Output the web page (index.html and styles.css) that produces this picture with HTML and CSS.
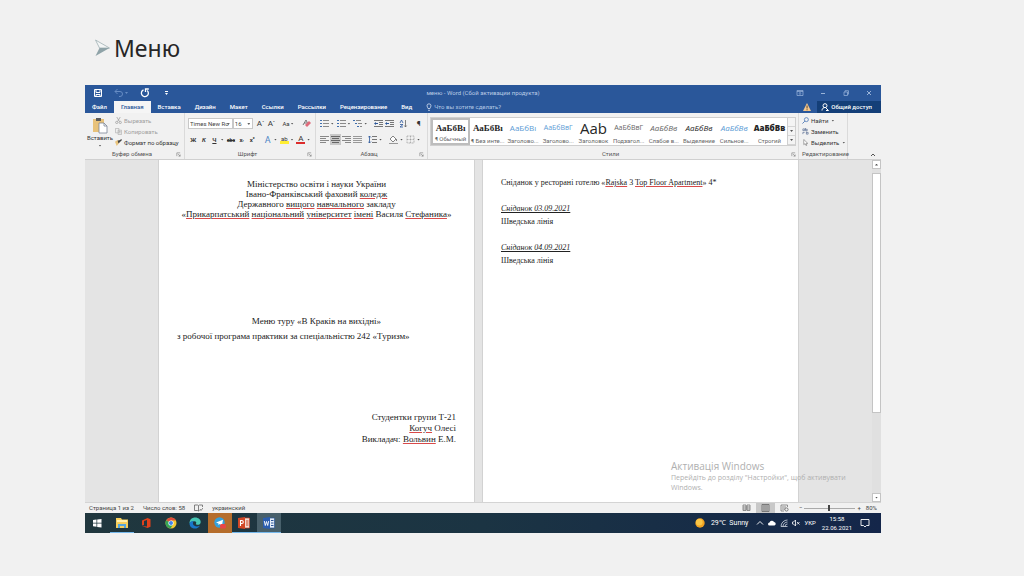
FILE: index.html
```html
<!DOCTYPE html>
<html lang="uk">
<head>
<meta charset="utf-8">
<title>Меню</title>
<link rel="stylesheet" href="styles.css">
</head>
<body>
<svg class="defs" aria-hidden="true">
  <symbol id="list" viewBox="0 0 9 9"><path d="M0 1h2v1H0zM0 4h2v1H0zM0 7h2v1H0z" fill="#3f6fae"/><path d="M3 1h6v1H3zM3 4h6v1H3zM3 7h6v1H3z" fill="#8a8a8a"/></symbol>
  <symbol id="multi" viewBox="0 0 9 9"><path d="M0 1h2v1H0zM2 4h2v1H2zM4 7h2v1H4z" fill="#3f6fae"/><path d="M3 1h5v1H3zM5 4h4v1H5zM7 7h2v1H7z" fill="#8a8a8a"/></symbol>
  <symbol id="indent" viewBox="0 0 9 9"><path d="M0 1h9v1H0zM5 3h4v1H5zM5 5h4v1H5zM0 7h9v1H0z" fill="#777"/><path d="M0 4.500l2-1.500v1h2v1H2v1z" fill="#2b579a"/></symbol>
  <symbol id="left" viewBox="0 0 9 9"><path d="M0 1h9v1H0zM0 3h6v1H0zM0 5h9v1H0zM0 7h6v1H0z" fill="#888"/></symbol>
  <symbol id="center" viewBox="0 0 9 9"><path d="M0 1h9v1H0zM1 3h7v1H1zM0 5h9v1H0zM1 7h7v1H1z" fill="#666"/></symbol>
  <symbol id="right" viewBox="0 0 9 9"><path d="M0 1h9v1H0zM3 3h6v1H3zM0 5h9v1H0zM3 7h6v1H3z" fill="#888"/></symbol>
  <symbol id="full" viewBox="0 0 9 9"><path d="M0 1h9v1H0zM0 3h9v1H0zM0 5h9v1H0zM0 7h9v1H0z" fill="#999"/></symbol>
  <symbol id="launch" viewBox="0 0 6 6"><path d="M1 5V1h4M2.500 2.500L5 5M5 3v2H3" fill="none" stroke="#777" stroke-width=".7"/></symbol>
</svg>

<main class="slide">
  <h1 class="heading">
    <svg class="bullet" viewBox="0 0 16 18"><path d="M1 1l14 8H5z" fill="#f4f6f6" stroke="#9fb0b4" stroke-width=".8"/><path d="M1 17L5 9h10z" fill="#8fa3a8"/></svg>
    Меню
  </h1>

  <section class="window">
    <header class="titlebar">
      <div class="quick">
        <button aria-label="Сохранить"><svg viewBox="0 0 10 10"><path d="M1.500 1.500h7v7h-7zM3 1.500v3h4v-3M3 8.500V6.500h4v2" fill="none" stroke="#fff"/></svg></button>
        <button class="faded" aria-label="Отменить"><svg viewBox="0 0 10 10"><path d="M3.500 1L1 3.500 3.500 6M1 3.500h5a2.500 2.500 0 0 1 0 5H5" fill="none" stroke="#8fb0e0"/></svg><i class="caret"></i></button>
        <button aria-label="Повторить"><svg viewBox="0 0 10 10"><path d="M3.500 1.900A3.500 3.500 0 1 0 7.200 2.500M5.500 4V1h3.300" fill="none" stroke="#fff" stroke-width="1.300"/></svg></button>
        <button aria-label="Настроить панель"><svg viewBox="0 0 10 10"><path d="M4 3h3v1H4zM4 5h3L5.500 7z" fill="#fff"/></svg></button>
      </div>
      <div class="doc-title">меню - Word (Сбой активации продукта)</div>
      <div class="controls">
        <button aria-label="Параметры ленты"><svg viewBox="0 0 8 8"><path d="M1 1.500h6v5H1zM1 2.500h6M4 6V3.500M3 4.500l1-1 1 1" fill="none" stroke="#9db8de" stroke-width=".7"/></svg></button>
        <button aria-label="Свернуть"><svg viewBox="0 0 8 8"><path d="M2 4.500h4" stroke="#b6cae8" stroke-width=".8"/></svg></button>
        <button aria-label="Развернуть"><svg viewBox="0 0 8 8"><path d="M2 3h3.500v3.500H2zM3 3V1.700h3.500v3.500h-1" fill="none" stroke="#9db8de" stroke-width=".7"/></svg></button>
        <button aria-label="Закрыть"><svg viewBox="0 0 8 8"><path d="M2 2l4 4M6 2L2 6" stroke="#b6cae8" stroke-width=".8"/></svg></button>
      </div>
    </header>

    <nav class="tabs">
      <button>Файл</button><button class="active">Главная</button><button>Вставка</button><button>Дизайн</button><button>Макет</button><button>Ссылки</button><button>Рассылки</button><button>Рецензирование</button><button>Вид</button>
      <button class="tell"><svg viewBox="0 0 8 8"><path d="M3 5.500C3 4.500 2 4.200 2 2.800a2 2 0 0 1 4 0C6 4.200 5 4.500 5 5.500zM3 7.300h2" fill="none" stroke="#d5e1f3" stroke-width=".8"/></svg>Что вы хотите сделать?</button>
      <svg class="warn" viewBox="0 0 8 8"><path d="M4 0l4 8H0z" fill="#f3c78d"/><path d="M3.600 2.500h.9v3h-.9zM3.600 6.200h.9v1h-.9z" fill="#4a3520"/></svg>
      <button class="share"><svg viewBox="0 0 8 8"><circle cx="4" cy="2.700" r="2" fill="none" stroke="#fff"/><path d="M1 7.500c0-2 1.500-3 3-3M5 5l2.500 2.500M5 7.500h2.500" fill="none" stroke="#fff"/></svg>Общий доступ</button>
    </nav>

    <div class="ribbon">
      <section class="group clipboard">
        <div class="tools clip">
          <button class="paste"><svg viewBox="0 0 16 17"><path d="M1 2h11v13H1z" fill="#e8c27a"/><path d="M4 1h5v3H4z" fill="#5b5b5b"/><path d="M7 6h5l3 3v7H7z" fill="#fff" stroke="#7b8797" stroke-width=".8"/><path d="M12 6v3h3" fill="none" stroke="#7b8797" stroke-width=".8"/></svg>Вставить<i class="caret"></i></button>
          <div class="stack">
            <button class="off"><svg viewBox="0 0 8 8"><path d="M2 0l3 5M6 0L3 5" stroke="#999" stroke-width=".8"/><circle cx="2" cy="6.200" r="1.300" fill="none" stroke="#999" stroke-width=".8"/><circle cx="6" cy="6.200" r="1.300" fill="none" stroke="#999" stroke-width=".8"/></svg>Вырезать</button>
            <button class="off"><svg viewBox="0 0 8 8"><path d="M.5 .5h4v5h-4zM3.500 2.500h4v5h-4zM4.500 4h2M4.500 5.500h2" fill="#eee" stroke="#aaa" stroke-width=".7"/></svg>Копировать</button>
            <button><svg viewBox="0 0 8 8"><path d="M0 3l3-2 2 3-3 4z" fill="#eac47c"/><path d="M3 2l2-1 1 2-2 2zM5 2l2-2 1 1-2 2z" fill="#444"/></svg>Формат по образцу</button>
          </div>
        </div>
        <footer><span>Буфер обмена</span><svg><use href="#launch"/></svg></footer>
      </section>

      <section class="group font">
        <div class="tools">
          <div class="row">
            <label class="pick name"><select aria-label="Шрифт"><option>Times New Ro</option></select></label>
            <label class="pick size"><select aria-label="Размер шрифта"><option>16</option></select></label>
            <button class="big">A<sup>ˆ</sup></button><button class="big">A<sup>ˇ</sup></button>
            <button class="wide push">Aa<i class="caret"></i></button>
            <button class="push" aria-label="Очистить формат"><svg viewBox="0 0 9 9"><path d="M1 6L4 1l2 4M2 4h3" fill="none" stroke="#777"/><path d="M3 6l4-4 2 2-4 4z" fill="#e06a7a"/></svg></button>
          </div>
          <div class="row">
            <button class="b">Ж</button><button class="b i">К</button><button class="b u">Ч</button><i class="caret"></i><button class="b s">abc</button><button class="b">x<sub>,</sub></button><button class="b">x<sup>²</sup></button>
            <button class="fx push">A</button><i class="caret"></i><button class="hl"><span>ab</span></button><i class="caret"></i><button class="fc"><span>A</span></button><i class="caret"></i>
          </div>
        </div>
        <footer><span>Шрифт</span><svg><use href="#launch"/></svg></footer>
      </section>

      <section class="group para">
        <div class="tools">
          <div class="row">
            <button aria-label="Маркеры"><svg><use href="#list"/></svg></button><i class="caret"></i><button aria-label="Нумерация"><svg><use href="#list"/></svg></button><i class="caret"></i><button aria-label="Многоуровневый список"><svg><use href="#multi"/></svg></button><i class="caret"></i>
            <button class="sep" aria-label="Уменьшить отступ"><svg><use href="#indent"/></svg></button><button aria-label="Увеличить отступ"><svg><use href="#indent"/></svg></button>
            <button class="sep" aria-label="Сортировка"><svg viewBox="0 0 9 9"><path d="M1 4l1.500-3L4 4M1 5.500h3L1 8h3" fill="none" stroke="#2b579a" stroke-width=".8"/><path d="M6.500 1v7M5.300 6.500L6.500 8l1.200-1.500" fill="none" stroke="#666" stroke-width=".8"/></svg></button>
            <button class="sep big">¶</button>
          </div>
          <div class="row">
            <button aria-label="По левому краю"><svg><use href="#left"/></svg></button><button class="on" aria-label="По центру"><svg><use href="#center"/></svg></button><button aria-label="По правому краю"><svg><use href="#right"/></svg></button><button aria-label="По ширине"><svg><use href="#full"/></svg></button>
            <button class="sep" aria-label="Интервал"><svg viewBox="0 0 9 9"><path d="M1.500 1v7M0 2.500L1.500 1 3 2.500M0 6.500L1.500 8 3 6.500" fill="none" stroke="#2b579a" stroke-width=".8"/><path d="M4 1h5v1H4zM4 4h5v1H4zM4 7h5v1H4z" fill="#777"/></svg></button><i class="caret"></i>
            <button class="sep" aria-label="Заливка"><svg viewBox="0 0 9 9"><path d="M1 4l3-3 3 3-3 3zM7.500 4v2" fill="#fff" stroke="#666" stroke-width=".8"/><path d="M0 8h9v1H0z" fill="#999"/></svg></button><i class="caret"></i><button aria-label="Границы"><svg viewBox="0 0 9 9"><path d="M1 1h7v7H1zM4.500 1v7M1 4.500h7" fill="none" stroke="#999" stroke-width=".7" stroke-dasharray="1 .5"/></svg></button><i class="caret"></i>
          </div>
        </div>
        <footer><span>Абзац</span><svg><use href="#launch"/></svg></footer>
      </section>

      <section class="group styles">
        <div class="gallery">
          <button class="serif chosen"><b>АаБбВı</b><span>¶ Обычный</span></button>
          <button class="serif"><b>АаБбВı</b><span>¶ Без инте...</span></button>
          <button class="blue"><b>АаБбВı</b><span>Заголово...</span></button>
          <button class="blue small"><b>АаБбВвГ</b><span>Заголово...</span></button>
          <button class="large"><b>Ааb</b><span>Заголовок</span></button>
          <button class="small grey"><b>АаБбВвГ</b><span>Подзагол...</span></button>
          <button class="ital grey"><b>АаБбВв</b><span>Слабое в...</span></button>
          <button class="ital"><b>АаБбВв</b><span>Выделение</span></button>
          <button class="ital blue"><b>АаБбВв</b><span>Сильное...</span></button>
          <button class="bold"><b>АаБбВв</b><span>Строгий</span></button>
          <div class="more"><button aria-label="Вверх"></button><button aria-label="Вниз"><i class="caret"></i></button><button aria-label="Ещё"><i class="caret"></i></button></div>
        </div>
        <footer><span>Стили</span><svg><use href="#launch"/></svg></footer>
      </section>

      <section class="group edit">
        <div class="stack">
          <button><svg viewBox="0 0 8 8"><circle cx="5" cy="3" r="2.300" fill="none" stroke="#4a76b5" stroke-width=".9"/><path d="M3.300 4.700L.5 7.500" stroke="#4a76b5"/></svg>Найти <i class="caret"></i></button>
          <button><svg viewBox="0 0 8 8"><path d="M1 3V1h2v2H1M4 0v3h2V1.500H4M1 7V5h2M5 5h2v2H5V4" fill="none" stroke="#5a6f93" stroke-width=".8"/></svg>Заменить</button>
          <button><svg viewBox="0 0 8 8"><path d="M2 .5v6l1.500-1.200L4.600 7.500l1-.5-1-2h2z" fill="#fff" stroke="#777" stroke-width=".7"/></svg>Выделить<i class="caret"></i></button>
        </div>
        <footer><span>Редактирование</span></footer>
      </section>
      <button class="collapse" aria-label="Свернуть ленту"><svg viewBox="0 0 6 6"><path d="M1 4l2-2 2 2" fill="none" stroke="#555"/></svg></button>
    </div>

    <div class="workspace">
      <div class="pages">
        <article class="page">
          <p class="center">Міністерство освіти і науки України<br>Івано-Франківський фаховий <u>коледж</u><br>Державного <u>вищого</u> <u>навчального</u> закладу<br>«<u>Прикарпатський</u> <u>національний</u> <u>університет</u> <u>імені</u> Василя <u>Стефаника</u>»</p>
          <p class="center subject">Меню туру «В Краків на вихідні»</p>
          <p class="program">з робочої програма практики за спеціальністю 242 «Туризм»</p>
          <p class="sign">Студентки групи Т-21<br><u>Когуч</u> Олесі<br>Викладач: <u>Вольвин</u> Е.М.</p>
        </article>
        <article class="page second">
          <p>Сніданок у ресторані готелю «<u>Rajska</u> 3 <u>Top Floor Apartment</u>» 4*</p>
          <p class="day">Сніданок 03.09.2021</p>
          <p>Шведська лінія</p>
          <p class="day">Сніданок 04.09.2021</p>
          <p>Шведська лінія</p>
        </article>
      </div>
      <div class="scroll"><button aria-label="Прокрутить вверх"><i class="caret up"></i></button><div class="track"><div class="thumb"></div></div><button aria-label="Прокрутить вниз"><i class="caret"></i></button></div>
      <aside class="activation"><strong>Активація Windows</strong>Перейдіть до розділу "Настройки", щоб активувати Windows.</aside>
    </div>

    <footer class="status">
      <span>Страница 1 из 2</span><span>Число слов: 58</span>
      <svg viewBox="0 0 9 8"><path d="M.5 1h3l1 .6V7L3.500 6.500h-3zM4.500 1.600l1-.6h3v2M4.500 7l1-.5M6 5l1 1.500L9 4" fill="none" stroke="#666" stroke-width=".8"/></svg>
      <span>украинский</span>
      <div class="views">
        <button aria-label="Режим чтения"><svg viewBox="0 0 9 8"><path d="M1 1h3v5.500H1zM5 1h3v5.500H5zM1 3h7M1 5h7" fill="none" stroke="#777" stroke-width=".8"/></svg></button>
        <button class="on" aria-label="Разметка страницы"><svg viewBox="0 0 9 8"><path d="M1 .5h7v7H1zM2 2h5M2 4h5M2 6h5" fill="none" stroke="#666" stroke-width=".8"/></svg></button>
        <button aria-label="Веб-документ"><svg viewBox="0 0 9 8"><path d="M1 1h6.500v2M1 1v6h3M2 3h4M2 5h3" fill="none" stroke="#777" stroke-width=".8"/><circle cx="6.500" cy="5.500" r="1.600" fill="none" stroke="#666" stroke-width=".8"/></svg></button>
      </div>
      <div class="scale"><button>−</button><input type="range" min="0" max="100" value="48" aria-label="Масштаб"><button>+</button></div>
      <span>80%</span>
    </footer>

    <footer class="taskbar">
      <div class="apps">
        <button aria-label="Пуск"><svg viewBox="0 0 12 12"><path d="M2 3l3.500-.5v3.200H2zM6.200 2.400L10.500 2v3.700H6.200zM2 6.400h3.500v3.300L2 9.200zM6.200 6.400h4.300V10.500L6.200 9.900z" fill="#fff"/></svg></button>
        <button class="open" aria-label="Проводник"><svg viewBox="0 0 12 12"><path d="M0 1h5l1 1.500h6V11H0z" fill="#f6ce5b"/><path d="M1 3h10v2H1z" fill="#fff0ad"/><path d="M2 11V7h8v4H8V9H4v2z" fill="#55a5dc"/></svg></button>
        <button aria-label="Office"><svg viewBox="0 0 12 12"><path d="M2 3.500L7.500 1 10.500 2.200v7.600L7.500 11 2 9l5 .5V3L4 4v4L2 8.500z" fill="#e2401b"/></svg></button>
        <button aria-label="Chrome"><svg viewBox="0 0 12 12"><circle cx="6" cy="6" r="5.500" fill="#f3c832"/><path d="M6 6L1.200 3.300A5.500 5.500 0 0 1 10.900 3.500H6z" fill="#df4b3c"/><path d="M6 6L1.200 3.300A5.500 5.500 0 0 0 5.500 11.500L8 7.500z" fill="#35a457"/><circle cx="6" cy="6" r="2.600" fill="#fff"/><circle cx="6" cy="6" r="2" fill="#4384ee"/></svg></button>
        <button aria-label="Edge"><svg viewBox="0 0 12 12"><path d="M.5 6.500C.5 2.500 3 .5 6.200 .5 9.500 .5 11.700 2.800 11.700 5c0 2-1.500 2.800-3.200 2.800-1.300 0-1.900-.7-1.400-1.500.7-1.300-.8-2.400-2.400-2C2.500 4.700 .9 5.500 .5 6.500z" fill="#46c6b4"/><path d="M.5 6.500C1 4.500 3 4 4.700 4.300 3 5.800 4 9.500 8 9.500c1 0 2-.3 2.800-.8C9.800 10.500 8 11.600 6 11.600 3 11.600 .5 9.500 .5 6.500z" fill="#1976c9"/></svg></button>
        <button class="alert" aria-label="Telegram"><svg viewBox="0 0 12 12"><circle cx="5.500" cy="5.500" r="5.200" fill="#35a1dc"/><path d="M2 5.500l7-2.700L8 8.500 5.500 7 4.500 8.300V6.500z" fill="#fff"/><rect x="6" y="7" width="6" height="4.500" rx="1.500" fill="#e84747"/></svg></button>
        <button class="open" aria-label="PowerPoint"><svg viewBox="0 0 12 12"><path d="M6 1h5.500v10H6z" fill="#f1dcd5" stroke="#cf4526" stroke-width=".7"/><path d="M0 1l7-1v12l-7-1z" fill="#d24625"/><path d="M2.500 9V3.500h1.300a1.500 1.500 0 0 1 0 3H2.500" fill="none" stroke="#fff" stroke-width="1.100"/><path d="M8 4h2.500M8 6h2.500M8 8h2.500" stroke="#d24625"/></svg></button>
        <button class="open current" aria-label="Word"><svg viewBox="0 0 12 12"><path d="M6 1h5.500v10H6z" fill="#e5edf8" stroke="#2b579a" stroke-width=".7"/><path d="M0 1l7-1v12l-7-1z" fill="#2b5eb0"/><path d="M1.300 4l1 4.500L3.500 4.500l1.200 4L5.700 4" fill="none" stroke="#fff" stroke-width=".9"/><path d="M8 3.500h2.500M8 6h2.500M8 8.500h2.500" stroke="#2b579a"/></svg></button>
      </div>
      <div class="tray">
        <svg viewBox="0 0 10 10"><circle cx="5" cy="5" r="4.700" fill="#f3a321"/><circle cx="4.300" cy="4.300" r="3.300" fill="#fbc747"/></svg>
        <span class="weather">29℃&ensp;Sunny</span>
        <svg class="mini" viewBox="0 0 8 8"><path d="M1 5.500l3-3 3 3" fill="none" stroke="#fff" stroke-width=".9"/></svg>
        <svg class="mini" viewBox="0 0 8 8"><path d="M1.500 6.500a1.500 1.500 0 0 1 0-3A2.500 2.500 0 0 1 6 3a1.800 1.800 0 0 1 .5 3.500z" fill="#fff"/></svg>
        <svg class="mini" viewBox="0 0 8 8"><path d="M1 7.500A6.500 6.500 0 0 1 7.500 1M3 7.500A4.500 4.500 0 0 1 7.500 3M5 7.500A2.500 2.500 0 0 1 7.500 5M1 7.500h6.500" fill="none" stroke="#d0d8e2" stroke-width=".8"/></svg>
        <svg class="mini" viewBox="0 0 8 8"><path d="M.5 3h1L3.500 1v6L1.500 5h-1zM5 3l2.500 2.500M7.500 3L5 5.500" fill="none" stroke="#fff" stroke-width=".8"/></svg>
        <span>УКР</span>
        <time>15:58<br>22.06.2021</time>
        <svg class="note" viewBox="0 0 10 10"><path d="M1 1.500h8v6H6.500L5 9 3.500 7.500H1z" fill="none" stroke="#fff" stroke-width=".9"/></svg>
      </div>
    </footer>
  </section>
</main>
</body>
</html>
```
FILE: styles.css
```css
* { box-sizing: border-box; }
body { margin: 0; background: #f1f1f1; color: #333; font: 6px/8px Roboto, "Open Sans", sans-serif; }
button { display: flex; align-items: center; justify-content: center; margin: 0; padding: 0; border: 0; background: none; color: inherit; font: inherit; white-space: nowrap; }
p { margin: 0; }
svg { flex: none; width: 9px; height: 9px; }
.defs { position: absolute; width: 0; height: 0; }

.slide { padding: 32px 143px 43px 85px; }
.heading { display: flex; align-items: center; gap: 3px; margin: 0 0 21px; padding-left: 9px; color: #262626; font: 23px/32px "Noto Sans", "Open Sans", sans-serif; }
.bullet { width: 17px; height: 18px; }

.caret { flex: none; width: 3px; height: 2px; margin: 0 1px; background: #555; clip-path: polygon(0 0, 100% 0, 50% 100%); }
.caret.up { clip-path: polygon(0 100%, 100% 100%, 50% 0); }

.titlebar { display: grid; grid-template-columns: 1fr auto 1fr; align-items: center; height: 16px; background: #2a579a; color: #bccde6; }
.quick { display: flex; gap: 11px; padding-left: 8px; }
.quick svg { width: 10px; height: 10px; }
.quick .caret { background: #8fb0e0; }
.faded { opacity: .6; }
.controls { display: flex; justify-content: flex-end; gap: 15px; padding-right: 8px; }
.controls svg { width: 8px; height: 8px; }

.tabs { display: flex; height: 12px; background: #2a579a; color: #fff; font-weight: 500; }
.tabs button { padding: 0 7px; }
.tabs .active { background: #f5f5f5; color: #2a579a; }
.tabs .tell { gap: 1px; padding: 0 6px; color: #b3c7e4; font-weight: 400; }
.tabs svg { width: 8px; height: 8px; }
.tabs .warn { align-self: center; margin: 0 6px 0 auto; }
.tabs .share { gap: 2px; padding: 0 9px 0 4px; background: #143f78; }

.ribbon { display: flex; height: 47px; background: #f1f1f1; border-bottom: 1px solid #d0d0d0; }
.group { display: flex; flex-direction: column; flex: none; padding: 2px 3px 1px; border-right: 1px solid #dadada; }
.group footer { display: flex; align-items: center; margin-top: auto; color: #555; height: 8px; }
.group footer span { flex: 1; text-align: center; white-space: nowrap; }
.group footer svg { width: 5px; height: 5px; }
.clipboard { width: 100px; }
.font { width: 131px; }
.para { width: 112px; }
.styles { flex: 1 1 0; min-width: 0; padding: 2px 2px 1px; }
.edit { width: 49px; }
.clip { display: flex; gap: 3px; }
.paste { flex-direction: column; width: 24px; }
.paste svg { width: 16px; height: 17px; }
.paste .caret { margin-top: 3px; }
.stack button { height: 11px; gap: 2px; }
.stack svg { width: 7px; height: 7px; }
.off { color: #a0a0a0; }

.row { display: flex; align-items: center; height: 11px; margin: 3px 0 5px; }
.row button { width: 11px; height: 11px; }
.row .push { margin-left: 5px; }
.row .wide { width: 15px; }
.row .big { font-size: 8px; }
.row sup, .row sub { font-size: 5px; line-height: 5px; }
.row .caret { margin: 0 2px 0 1px; }
.pick { position: relative; height: 11px; border: 1px solid #c8c8c8; background: #fff; }
.pick select { display: block; width: 100%; height: 9px; padding: 0 1px; border: 0; background: none; color: #444; font: inherit; appearance: none; }
.pick::after { content: ""; position: absolute; right: 2px; top: 4px; width: 3px; height: 2px; background: #666; clip-path: polygon(0 0, 100% 0, 50% 100%); }
.name { width: 46px; }
.size { width: 21px; margin-right: 2px; }
.b { font-weight: 700; }
.i { font-style: italic; }
.u { text-decoration: underline; }
.s { text-decoration: line-through; font-size: 5px; }
.row .fx { color: #4f86c6; font-size: 9px; }
.hl span, .fc span { width: 9px; height: 9px; line-height: 7px; }
.hl span { border-bottom: 3px solid #ffee32; }
.fc span { border-bottom: 2px solid #dc2c2c; font-size: 8px; }
.sep { margin-left: 4px; }
.on { background: #c8c8c8; }

.gallery { display: flex; height: 29px; margin-top: 2px; border: 1px solid #cfcfcf; background: #fff; }
.gallery > button { flex: 1 1 0; min-width: 0; flex-direction: column; justify-content: flex-end; overflow: hidden; color: #262626; }
.gallery b { display: flex; align-items: center; height: 16px; font-family: "Open Sans", sans-serif; font-size: 8px; font-weight: 400; }
.gallery span { color: #666; line-height: 9px; }
.gallery .chosen { border: 2px solid #bdbdbd; }
.gallery .chosen b { height: 15px; }
.gallery .chosen span { line-height: 8px; }
.gallery .serif b { font: 700 9px "Liberation Serif", serif; }
.gallery .blue b { color: #5b9bd5; }
.gallery .small b { font-size: 7px; }
.gallery .grey b { color: #666; }
.gallery .large b { font-size: 15px; }
.gallery .ital b { font-style: italic; }
.gallery .bold b { font-weight: 800; }
.more { display: flex; flex-direction: column; width: 8px; border-left: 1px solid #cfcfcf; background: #f4f4f4; }
.more button { flex: 1; border-bottom: 1px solid #d5d5d5; }
.collapse { align-items: flex-end; justify-content: flex-end; width: 33px; padding: 0 5px 1px 0; }
.collapse svg { width: 6px; height: 6px; }

.workspace { position: relative; display: flex; height: 342px; background: #e4e4e4; }
.pages { display: flex; flex: 1; justify-content: center; gap: 7px; min-width: 0; }
.page { flex: 0 1 317px; padding: 19px 18px; border: solid #d2d2d2; border-width: 0 1px; background: #fff; color: #222; font: 9px/10px "Liberation Serif", serif; }
.page u { text-decoration: underline #d84a4a 1px; }
.center { text-align: center; white-space: nowrap; }
.subject { margin-top: 97px; }
.program { margin-top: 5px; }
.sign { margin-top: 71px; text-align: right; line-height: 11px; }
.second { font-size: 8px; line-height: 8px; }
.second p + p { margin-top: 5px; }
.second .day { font-style: italic; text-decoration: underline; }
.second p + .day { margin-top: 18px; }
.scroll { display: flex; flex-direction: column; width: 9px; background: #e0e0e0; }
.scroll button { height: 9px; border: 1px solid #c4c4c4; background: #fff; }
.track { flex: 1; padding: 4px 0; }
.thumb { height: 76%; border: 1px solid #c4c4c4; background: #fff; }
.activation { position: absolute; right: 12px; bottom: 9px; width: 198px; color: #b0b0b0; font: 7px/10px "Open Sans", sans-serif; }
.activation strong { display: block; font-size: 10px; font-weight: 400; line-height: 13px; }

.status { display: flex; align-items: center; gap: 9px; height: 11px; padding: 0 4px; background: #f1f1f1; border-top: 1px solid #d4d4d4; color: #444; }
.status svg { height: 8px; }
.views { display: flex; margin-left: auto; }
.views button { width: 19px; height: 10px; }
.scale { display: flex; align-items: center; gap: 2px; margin: 0 -4px; }
.status input { width: 51px; height: 8px; margin: 0; appearance: none; background: linear-gradient(#aaa, #aaa) center / 100% 1px no-repeat; }
.status input::-webkit-slider-thumb { appearance: none; width: 2px; height: 6px; background: #444; }

.taskbar { display: flex; justify-content: space-between; height: 20px; background: linear-gradient(90deg, #20373e, #1b3443 50%, #14264a); color: #fff; }
.apps { display: grid; grid-template-columns: repeat(8, 1fr); width: 196px; }
.apps svg { width: 12px; height: 12px; }
.apps .open { border-bottom: 1px solid #76b9ed; }
.apps .alert { background: #b56d2c; }
.apps .current { background: #48606b; }
.tray { display: flex; align-items: center; gap: 4px; padding-right: 11px; }
.tray svg { width: 10px; height: 10px; }
.tray .mini { width: 8px; height: 8px; }
.tray .weather { margin: 0 4px 0 2px; font-size: 7px; }
.tray time { margin: 0 4px 0 2px; text-align: center; line-height: 9px; }
```
